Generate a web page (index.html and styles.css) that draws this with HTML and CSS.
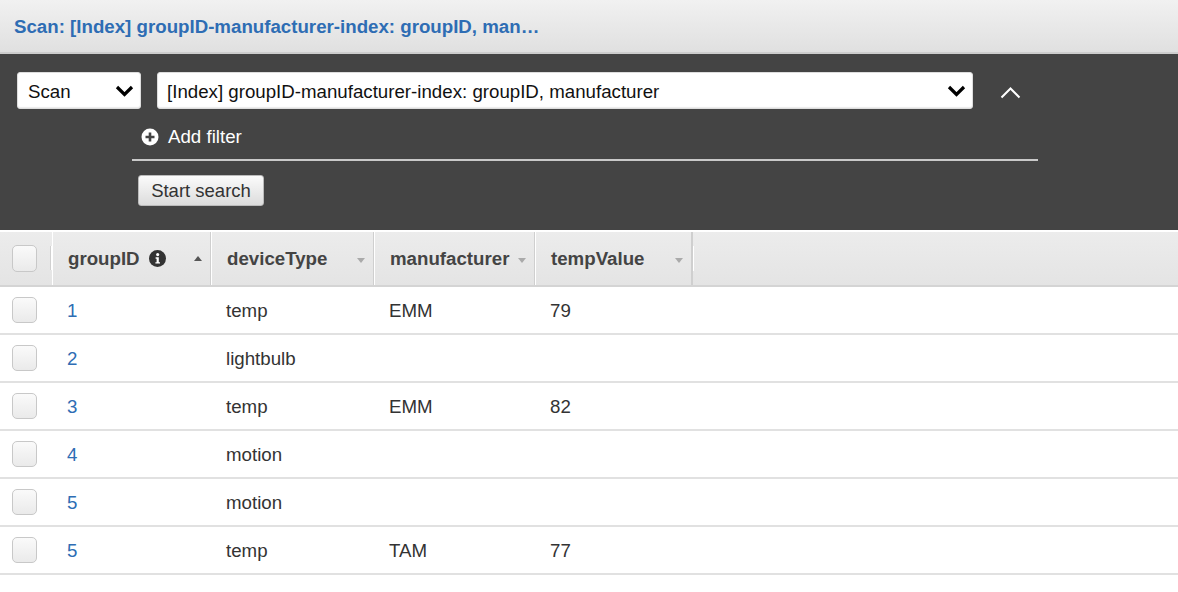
FILE: index.html
```html
<!DOCTYPE html>
<html>
<head>
<meta charset="utf-8">
<link rel="stylesheet" href="styles.css">
</head>
<body>
<div class="titlebar"><span class="title">Scan: [Index] groupID-manufacturer-index: groupID, man…</span></div>
<div class="panel">
  <div class="selects">
    <div class="select scan"><span>Scan</span>
      <svg class="chev" width="19" height="12" viewBox="0 0 19 12"><path d="M2 2 L9.5 9.5 L17 2" fill="none" stroke="#000" stroke-width="3.2"/></svg>
    </div>
    <div class="select index"><span>[Index] groupID-manufacturer-index: groupID, manufacturer</span>
      <svg class="chev" width="19" height="12" viewBox="0 0 19 12"><path d="M2 2 L9.5 9.5 L17 2" fill="none" stroke="#000" stroke-width="3.2"/></svg>
    </div>
    <svg class="collapse" width="21" height="13" viewBox="0 0 21 13"><path d="M1.5 11.5 L10.5 2.5 L19.5 11.5" fill="none" stroke="#fff" stroke-width="2"/></svg>
  </div>
  <div class="filters">
    <div class="addfilter">
      <svg width="18" height="18" viewBox="0 0 18 18"><circle cx="9" cy="9" r="8.5" fill="#fff"/><path d="M9 4.5 V13.5 M4.5 9 H13.5" stroke="#444" stroke-width="2.6"/></svg>
      <span>Add filter</span>
    </div>
    <div class="rule"></div>
    <button class="btn">Start search</button>
  </div>
</div>
<div class="gap"></div>
<div class="table">
  <div class="row head">
    <div class="cell cb"><span class="box"></span><span class="sep"></span></div>
    <div class="cell hc"><span class="lbl">groupID</span>
      <svg class="info" width="17" height="17" viewBox="0 0 17 17"><circle cx="8.5" cy="8.5" r="8.5" fill="#333"/><circle cx="8.7" cy="4.6" r="1.6" fill="#fff"/><path d="M6.6 7.3 H9.8 V12.2 H11 V13.6 H6.4 V12.2 H7.6 V8.7 H6.6 Z" fill="#fff"/></svg>
      <span class="sort up"></span></div>
    <div class="cell hc"><span class="lbl">deviceType</span><span class="sort down"></span></div>
    <div class="cell hc"><span class="lbl">manufacturer</span><span class="sort down"></span></div>
    <div class="cell hc last"><span class="lbl">tempValue</span><span class="sort down"></span></div>
    <div class="cell fill"></div>
  </div>
  <div class="row"><div class="cell cb"><span class="box"></span></div><div class="cell id">1</div><div class="cell">temp</div><div class="cell">EMM</div><div class="cell">79</div><div class="cell fill"></div></div>
  <div class="row"><div class="cell cb"><span class="box"></span></div><div class="cell id">2</div><div class="cell">lightbulb</div><div class="cell"></div><div class="cell"></div><div class="cell fill"></div></div>
  <div class="row"><div class="cell cb"><span class="box"></span></div><div class="cell id">3</div><div class="cell">temp</div><div class="cell">EMM</div><div class="cell">82</div><div class="cell fill"></div></div>
  <div class="row"><div class="cell cb"><span class="box"></span></div><div class="cell id">4</div><div class="cell">motion</div><div class="cell"></div><div class="cell"></div><div class="cell fill"></div></div>
  <div class="row"><div class="cell cb"><span class="box"></span></div><div class="cell id">5</div><div class="cell">motion</div><div class="cell"></div><div class="cell"></div><div class="cell fill"></div></div>
  <div class="row"><div class="cell cb"><span class="box"></span></div><div class="cell id">5</div><div class="cell">temp</div><div class="cell">TAM</div><div class="cell">77</div><div class="cell fill"></div></div>
</div>
</body>
</html>
```

FILE: styles.css
```css
* { box-sizing: border-box; }
html, body { margin: 0; padding: 0; background: #fff; }
body { font-family: "Liberation Sans", Arial, Helvetica, sans-serif; color: #333; width: 1178px; overflow: hidden; }

.titlebar {
  height: 54px;
  background: linear-gradient(#f1f1f1, #e0e0e0);
  border-bottom: 2px solid #cdcdcd;
  display: flex;
  align-items: center;
  padding-left: 14px;
  padding-top: 2px;
}
.title { color: #2e6db4; font-weight: bold; font-size: 18.7px; }

.panel {
  background: #444;
  height: 176px;
  padding: 18px 0 0 17px;
}
.selects { display: flex; align-items: center; height: 37px; }
.select {
  background: #fff;
  border: 1px solid #ddd;
  border-radius: 3px;
  height: 37px;
  display: flex;
  align-items: center;
  justify-content: space-between;
  font-size: 18.7px;
  color: #111;
  box-shadow: inset 0 -1px 1px rgba(0,0,0,0.08);
}
.select span { padding-top: 2px; }
.select.scan { width: 124px; padding: 0 6px 0 10px; }
.select.index { width: 816px; margin-left: 16px; padding: 0 6px 0 9px; }
.chev { display: block; }
.collapse { margin-left: 27px; margin-top: 4px; display: block; }

.filters { margin-left: 115px; width: 906px; }
.addfilter { display: flex; align-items: center; height: 28px; margin-top: 14px; padding-left: 9px; color: #fff; font-size: 18.7px; }
.addfilter svg { margin-right: 9px; display: block; }
.rule { height: 2px; background: #c9c9c9; margin-top: 8px; }
.btn {
  margin: 14px 0 0 6px;
  width: 126px;
  height: 31px;
  font-family: inherit;
  font-size: 18.5px;
  color: #333;
  background: linear-gradient(#fbfbfb, #dcdcdc);
  border: 1px solid #bbb;
  border-radius: 3px;
  padding: 0;
}

.gap { height: 2px; background: #fff; }

.row { display: grid; grid-template-columns: 52px 159px 163px 161px 158px 1fr; height: 48px; border-bottom: 2px solid #e1e1e1; font-size: 18.7px; }
.row.head { height: 55px; background: linear-gradient(#ececec, #e4e4e4); border-bottom: 2px solid #d4d4d4; }
.cell { display: flex; align-items: center; padding-left: 15px; padding-top: 2px; }
.cell.id { color: #2e6db4; padding-left: 15px; }
.cell.cb { padding-left: 12px; padding-top: 0; position: relative; }
.cell.fill { padding: 0; }
.box {
  width: 25px; height: 26px;
  border: 1px solid #c8c8c8;
  border-radius: 5px;
  background: linear-gradient(#fafafa, #eaeaea);
  display: block;
}
.head .box { height: 27px; }
.sep { position: absolute; right: 0; top: 14px; height: 24px; width: 2px; border-left: 1px solid #d0d0d0; border-right: 1px solid #fff; }
.hc { border-left: 1px solid #fff; border-right: 1px solid #cfcfcf; padding-left: 15px; padding-top: 0; font-weight: bold; color: #444; position: relative; }
.hc.last { border-right: 2px solid #cfcfcf; }
.head .fill { border-left: 1px solid #fff; margin-top: 14px; margin-bottom: 14px; width: 2px; }
.lbl { font-size: 18.7px; }
.info { margin-left: 9px; display: block; }
.sort { position: absolute; right: 8px; top: 24px; width: 0; height: 0; border-left: 4px solid transparent; border-right: 4px solid transparent; }
.sort.up { border-bottom: 5px solid #555; }
.sort.down { border-top: 5px solid #aaa; top: 26px; }
```
